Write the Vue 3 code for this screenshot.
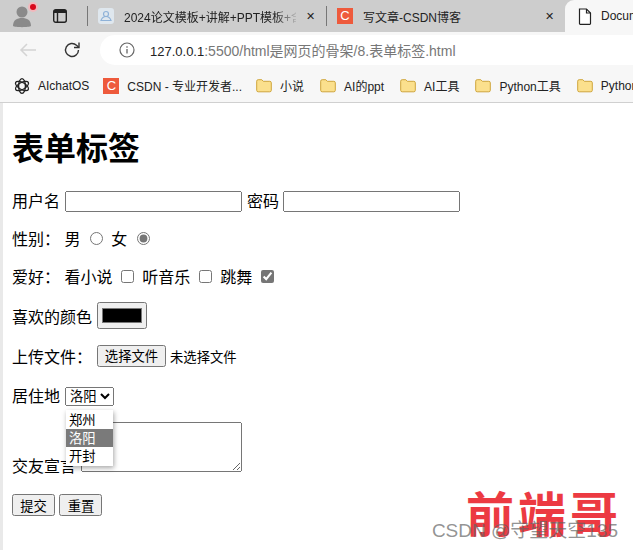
<template>
  <div class="browser">
    <div class="tabbar">
      <div class="avatar">
        <svg width="24" height="24" viewBox="0 0 24 24">
          <circle cx="10" cy="8" r="5.500" fill="#8a8a8a" />
          <path d="M1 22c0-6 4-8 9-8s9 2 9 8c-2 1.500-16 1.500-18 0z" fill="#8a8a8a" />
        </svg>
        <span class="dot"></span>
      </div>
      <svg class="tab-layout" width="16" height="16" viewBox="0 0 16 16">
        <rect x="1.700" y="1.700" width="12.600" height="12.600" rx="2" fill="none" stroke="#222" stroke-width="1.400" />
        <path d="M5.500 5v9" stroke="#222" stroke-width="1.400" fill="none" />
        <rect x="2" y="2" width="12" height="3" fill="#222" />
      </svg>
      <span class="sep first"></span>
      <div class="tab tab-one">
        <svg width="16" height="16" viewBox="0 0 16 16">
          <rect width="16" height="16" rx="3" fill="#dfe7ee" />
          <circle cx="8" cy="6" r="2.500" fill="none" stroke="#8fb2d8" stroke-width="1.200" />
          <path d="M3 12.500c1-3 3-4 5-4s4 1 5 4z" fill="none" stroke="#8fb2d8" stroke-width="1.200" />
        </svg>
        <span class="tab-title fade">2024论文模板+讲解+PPT模板+含</span>
        <span class="close">✕</span>
      </div>
      <span class="sep"></span>
      <div class="tab tab-two">
        <span class="csdn-icon">C</span>
        <span class="tab-title">写文章-CSDN博客</span>
        <span class="close">✕</span>
      </div>
      <div class="tab active">
        <svg width="14" height="17" viewBox="0 0 14 17">
          <path d="M1.500 1h7l4 4v10.500a.8.8 0 0 1-.8.800H2.300a.8.8 0 0 1-.8-.8z" fill="#fff" stroke="#222" stroke-width="1.200" />
          <path d="M8.500 1v4h4" fill="none" stroke="#222" stroke-width="1.200" />
        </svg>
        <span class="tab-title">Document</span>
      </div>
    </div>

    <div class="toolbar">
      <svg width="20" height="20" viewBox="0 0 20 20">
        <path d="M18 10H3M9 4l-6 6 6 6" fill="none" stroke="#d4d4d4" stroke-width="1.500" />
      </svg>
      <svg class="reload" width="18" height="18" viewBox="0 0 18 18">
        <path d="M15.500 9a6.500 6.500 0 1 1-2-4.700L15.500 6" fill="none" stroke="#333" stroke-width="1.400" />
        <path d="M16 1.500V6.500h-5" fill="none" stroke="#333" stroke-width="1.400" />
      </svg>
      <div class="address">
        <svg width="16" height="16" viewBox="0 0 16 16">
          <circle cx="8" cy="8" r="7" fill="none" stroke="#666" stroke-width="1.200" />
          <path d="M8 7v4.500M8 4.300v1.400" stroke="#666" stroke-width="1.300" />
        </svg>
        <span class="url"><b>127.0.0.1</b>:5500/html是网页的骨架/8.表单标签.html</span>
      </div>
    </div>

    <div class="bookmarks">
      <div class="mark openai">
        <svg width="16" height="16" viewBox="0 0 16 16">
          <g fill="none" stroke="#222" stroke-width="1.300">
            <ellipse cx="8" cy="8" rx="3.400" ry="7.300" />
            <ellipse cx="8" cy="8" rx="3.400" ry="7.300" transform="rotate(60 8 8)" />
            <ellipse cx="8" cy="8" rx="3.400" ry="7.300" transform="rotate(120 8 8)" />
          </g>
        </svg>
        <span>AIchatOS</span>
      </div>
      <div class="mark csdn">
        <span class="csdn-icon">C</span>
        <span>CSDN - 专业开发者...</span>
      </div>
      <div v-for="name in folders" :key="name" class="mark">
        <svg width="16" height="14" viewBox="0 0 16 14">
          <path d="M.7 2.200A1.500 1.500 0 0 1 2.200.7h3.600l1.500 1.600h6.500a1.500 1.500 0 0 1 1.500 1.500v7.500a1.500 1.500 0 0 1-1.500 1.500H2.200a1.500 1.500 0 0 1-1.500-1.500z" fill="#fbe08d" stroke="#cfa63c" stroke-width="1" />
        </svg>
        <span>{{ name }}</span>
      </div>
    </div>

    <div class="page">
      <h1>表单标签</h1>
      <form>
        <p class="line">
          <span>用户名</span>
          <input class="text" type="text" />
          <span>密码</span>
          <input class="text pass" type="password" />
        </p>
        <p>
          性别：
          男 <input type="radio" name="sex" /> 女 <input type="radio" name="sex" checked />
        </p>
        <p class="hobby">
          爱好：
          看小说 <input type="checkbox" /> 听音乐 <input type="checkbox" /> 跳舞 <input type="checkbox" checked />
        </p>
        <p class="line color-row">
          <span>喜欢的颜色</span>
          <input class="color" type="color" value="#000000" />
        </p>
        <p class="line file-row">
          <span>上传文件：</span>
          <button class="file" type="button">选择文件</button>
          <span class="no-file">未选择文件</span>
        </p>
        <p class="line">
          <span>居住地</span>
          <span class="select-wrap">
            <select class="city">
              <option>郑州</option>
              <option selected>洛阳</option>
              <option>开封</option>
            </select>
            <ul class="dropdown">
              <li v-for="c in cities" :key="c" :class="{ picked: c === '洛阳' }">{{ c }}</li>
            </ul>
          </span>
        </p>
        <p class="declare">
          交友宣言 <textarea cols="30" rows="3"></textarea>
        </p>
        <p class="actions">
          <input type="submit" value="提交" /> <input type="reset" value="重置" />
        </p>
      </form>
    </div>

    <div class="logo">前端哥</div>
    <div class="credit">CSDN @守望天空135</div>
  </div>
</template>

<script setup>
const folders = ["小说", "AI的ppt", "AI工具", "Python工具", "Python"]
const cities = ["郑州", "洛阳", "开封"]
</script>

<style>
html,
body {
  margin: 0;
  overflow: hidden;
}
</style>

<style scoped>
.browser {
  position: relative;
  width: 633px;
  height: 550px;
  overflow: hidden;
  background: #fff;
  font-family: "Liberation Sans", "Noto Sans CJK SC", sans-serif;
  color: #000;
}
.tabbar {
  display: flex;
  align-items: center;
  height: 32px;
  background: #cdcdcd;
  color: #222;
  font-size: 12px;
}
.avatar {
  position: relative;
  width: 24px;
  height: 24px;
  margin-left: 12px;
}
.dot {
  position: absolute;
  top: 0;
  right: 0;
  width: 6px;
  height: 6px;
  border-radius: 50%;
  background: #d8091c;
  box-shadow: 0 0 0 2px #f1b8bc;
}
.tab-layout {
  margin-left: 16px;
}
.sep {
  width: 1px;
  height: 20px;
  background: #777;
}
.sep.first {
  margin-left: 19px;
}
.tab {
  display: flex;
  align-items: center;
  height: 32px;
  box-sizing: border-box;
  white-space: nowrap;
  overflow: hidden;
}
.tab-one {
  width: 238px;
  padding-left: 10px;
  gap: 10px;
}
.tab-two {
  width: 238px;
  padding-left: 10px;
  gap: 10px;
}
.tab-title {
  flex: 1;
  overflow: hidden;
}
.fade {
  -webkit-mask-image: linear-gradient(to right, #000 150px, transparent 176px);
  mask-image: linear-gradient(to right, #000 150px, transparent 176px);
}
.close {
  width: 20px;
  flex: none;
  font-size: 11px;
  text-align: left;
}
.active {
  flex: 1;
  padding-left: 13px;
  gap: 9px;
  background: #f7f7f7;
  border-radius: 9px 0 0 0;
}
.csdn-icon {
  display: inline-block;
  width: 16px;
  height: 16px;
  flex: none;
  background: #ee5a3c;
  color: #fff;
  font-size: 13px;
  line-height: 16px;
  text-align: center;
}
.toolbar {
  display: flex;
  align-items: center;
  height: 30px;
  padding: 3px 0 0 18px;
  background: #f7f7f7;
}
.reload {
  margin-left: 25px;
}
.address {
  display: flex;
  align-items: center;
  flex: 1;
  height: 30px;
  margin-left: 19px;
  padding-left: 19px;
  gap: 15px;
  background: #fff;
  border-radius: 15px 0 0 15px;
}
.url {
  font-size: 14px;
  color: #777;
  white-space: nowrap;
}
.url b {
  font-size: 13px;
  font-weight: 400;
  color: #222;
}
.bookmarks {
  display: flex;
  align-items: center;
  height: 38px;
  padding: 4px 0 0 14px;
  gap: 16px;
  background: #f7f7f7;
  border-bottom: 1px solid #d0d0d0;
  box-sizing: border-box;
  font-size: 12px;
  color: #222;
  white-space: nowrap;
}
.mark {
  display: flex;
  align-items: center;
  gap: 8px;
}
.openai,
.csdn {
  margin-right: -2px;
}
.page {
  height: 447px;
  padding: 8px 0 0 12px;
  box-sizing: border-box;
  background: linear-gradient(to right, #e9e9e9 3px, #fff 3px);
  font-size: 16px;
}
h1 {
  margin: 15px 0 18px;
  font-size: 32px;
  line-height: 46px;
}
p {
  margin: 0 0 16px;
  height: 22px;
  line-height: 24px;
  white-space: nowrap;
}
.line {
  display: flex;
  align-items: flex-start;
}
.text {
  width: 169px;
  height: 15px;
  margin: 1px 5px 0;
}
.pass {
  margin-left: 4px;
}
input[type="radio"],
input[type="checkbox"] {
  accent-color: #767676;
}
input[type="radio"] {
  margin: 3px 4px 0 5px;
}
input[type="checkbox"] {
  margin: 3px 4px 0 4px;
}
.hobby {
  height: 24px;
}
.color-row {
  height: 24px;
}
.color {
  width: 50px;
  height: 27px;
  margin: -4px 0 0 5px;
}
.file-row {
  height: 23px;
}
.file {
  width: 69px;
  height: 22px;
  margin: -1px 0 0 5px;
  padding: 0;
  font-family: inherit;
  font-size: 13.333px;
  line-height: 20px;
}
.no-file {
  margin-left: 4px;
  font-size: 13.333px;
}
.select-wrap {
  position: relative;
  margin: 2px 0 0 5px;
}
.city {
  display: block;
  font-family: inherit;
  font-size: 13.333px;
}
.dropdown {
  position: absolute;
  z-index: 2;
  top: 23px;
  left: 1px;
  width: 47px;
  margin: 0;
  padding: 1px 0;
  list-style: none;
  background: #fff;
  box-shadow: 1px 2px 5px rgba(0, 0, 0, 0.35);
  font-size: 13.333px;
}
.dropdown li {
  height: 18px;
  padding-left: 3px;
  line-height: 20px;
}
.dropdown .picked {
  background: #7a7a7a;
  color: #fff;
}
.declare {
  height: 50px;
  line-height: 1;
  margin-top: -1px;
  word-spacing: 1px;
}
textarea {
  width: 155px;
  height: 44px;
  margin: 0;
  vertical-align: baseline;
}
.actions {
  margin-top: 22px;
}
.actions input {
  width: 43px;
  height: 22px;
  padding: 0;
  vertical-align: top;
  font-family: inherit;
  font-size: 13.333px;
}
.logo {
  position: absolute;
  right: 11px;
  top: 483px;
  color: #ec3a42;
  font-family: "Noto Sans CJK SC", sans-serif;
  font-size: 48px;
  font-weight: 700;
  line-height: 56px;
  letter-spacing: 4px;
}
.credit {
  position: absolute;
  right: 15px;
  top: 521px;
  color: rgba(100, 100, 100, 0.7);
  font-size: 19px;
  line-height: 20px;
  white-space: nowrap;
}
</style>
